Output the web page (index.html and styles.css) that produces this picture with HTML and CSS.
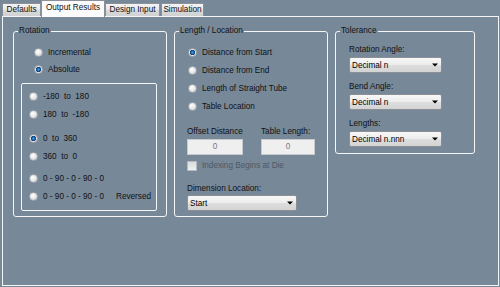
FILE: index.html
```html
<!DOCTYPE html>
<html>
<head>
    <meta charset="UTF-8">
    <title>Output Results</title>
    <link rel="stylesheet" href="styles.css">
</head>
<body>
    <div class="tabs">
        <div class="tab tab-defaults">Defaults</div>
        <div class="tab tab-output active">Output Results</div>
        <div class="tab tab-design">Design Input</div>
        <div class="tab tab-sim">Simulation</div>
    </div>
    <div class="page">
        <!-- Rotation -->
        <fieldset class="group group-rotation">
            <legend>Rotation</legend>
            <div class="mode-list">
                <div class="radio-row"><span class="radio"></span>Incremental</div>
                <div class="radio-row"><span class="radio checked"></span>Absolute</div>
            </div>
            <div class="range-box">
                <div class="range-pair">
                    <div class="radio-row"><span class="radio"></span>-180  to  180</div>
                    <div class="radio-row"><span class="radio"></span>180  to  -180</div>
                </div>
                <div class="range-pair">
                    <div class="radio-row"><span class="radio checked"></span>0  to  360</div>
                    <div class="radio-row"><span class="radio"></span>360  to  0</div>
                </div>
                <div class="range-pair">
                    <div class="radio-row"><span class="radio"></span>0 - 90 - 0 - 90 - 0</div>
                    <div class="radio-row"><span class="radio"></span>0 - 90 - 0 - 90 - 0<span class="reversed">Reversed</span></div>
                </div>
            </div>
        </fieldset>
        <!-- Length / Location -->
        <fieldset class="group group-length">
            <legend>Length / Location</legend>
            <div class="location-list">
                <div class="radio-row"><span class="radio checked"></span>Distance from Start</div>
                <div class="radio-row"><span class="radio"></span>Distance from End</div>
                <div class="radio-row"><span class="radio"></span>Length of Straight Tube</div>
                <div class="radio-row"><span class="radio"></span>Table Location</div>
            </div>
            <div class="offset-row">
                <div class="offset-col offset-distance">
                    <div class="label">Offset Distance</div>
                    <div class="field">0</div>
                </div>
                <div class="offset-col table-length">
                    <div class="label">Table Length:</div>
                    <div class="field">0</div>
                </div>
            </div>
            <div class="check-row"><span class="check"></span>Indexing Begins at Die</div>
            <div class="dimension">
                <div class="label">Dimension Location:</div>
                <div class="combo combo-wide"><span>Start</span><svg width="6" height="4" viewBox="0 0 6 4"><path d="M0 0.5H6L3 3.5Z" fill="#000"/></svg></div>
            </div>
        </fieldset>
        <!-- Tolerance -->
        <fieldset class="group group-tolerance">
            <legend>Tolerance</legend>
            <div class="tol-list">
                <div class="tol-item">
                    <div class="label">Rotation Angle:</div>
                    <div class="combo"><span>Decimal n</span><svg width="6" height="4" viewBox="0 0 6 4"><path d="M0 0.5H6L3 3.5Z" fill="#000"/></svg></div>
                </div>
                <div class="tol-item">
                    <div class="label">Bend Angle:</div>
                    <div class="combo"><span>Decimal n</span><svg width="6" height="4" viewBox="0 0 6 4"><path d="M0 0.5H6L3 3.5Z" fill="#000"/></svg></div>
                </div>
                <div class="tol-item">
                    <div class="label">Lengths:</div>
                    <div class="combo"><span>Decimal n.nnn</span><svg width="6" height="4" viewBox="0 0 6 4"><path d="M0 0.5H6L3 3.5Z" fill="#000"/></svg></div>
                </div>
            </div>
        </fieldset>
    </div>
</body>
</html>
```

FILE: styles.css
```css
body {
    margin: 0;
    width: 500px;
    height: 287px;
    overflow: hidden;
    background-color: #778899;
    font-family: "Liberation Sans", Arial, sans-serif;
    font-size: 8.2px;
    color: #111;
}

/* tab strip */
.tabs {
    display: flex;
    align-items: flex-end;
    height: 16px;
    padding-left: 2px;
}
.tab {
    box-sizing: border-box;
    height: 13px;
    line-height: 11px;
    text-align: center;
    border: 1px solid #8b8f97;
    border-bottom: none;
    border-radius: 1px 1px 0 0;
    background: linear-gradient(#f4f4f4, #e6e6e6 50%, #dadada 51%, #d0d1d2);
}
.tab-defaults { width: 39px; }
.tab-output { width: 64px; }
.tab-design { width: 55px; }
.tab-sim { width: 43px; margin-left: 1px; }
.tab.active {
    height: 17px;
    line-height: 14px;
    margin-bottom: -1px;
    background: #fbfbfc;
    position: relative;
    z-index: 1;
}

/* tab page */
.page {
    box-sizing: border-box;
    width: 497px;
    height: 270px;
    margin-left: 2px;
    border: 1px solid #f2f4f6;
    padding: 9px 0 0 10px;
    display: flex;
    align-items: flex-start;
    gap: 7px;
}

.group {
    box-sizing: border-box;
    margin: 0;
    padding: 0;
    min-width: 0;
    border: 1px solid #f4f6f8;
    border-radius: 3px;
}
.group legend {
    margin-left: 4px;
    padding: 0 1px;
    height: 10px;
    line-height: 10px;
}
.group-rotation { width: 154px; height: 191px; }
.group-length { width: 154px; height: 191px; }
.group-tolerance { width: 140px; height: 128px; }

/* radios */
.radio-row {
    display: flex;
    align-items: center;
    height: 18px;
    white-space: pre;
}
.radio {
    box-sizing: border-box;
    flex: none;
    width: 9px;
    height: 9px;
    border-radius: 50%;
    border: 1px solid #a3a8ad;
    background: radial-gradient(circle at 40% 35%, #ffffff 0, #ebebeb 45%, #c6c8cb 100%);
    margin-right: 5px;
}
.radio.checked {
    background: radial-gradient(circle at 50% 50%, #4a9ce0 0, #1c63a8 1.6px, #0b3f73 2.4px, #e9e9e9 3px, #c6c8cb 100%);
}

.mode-list {
    padding: 8px 0 0 20px;
}
.mode-list .radio-row { height: 17px; }

.range-box {
    box-sizing: border-box;
    width: 136px;
    height: 128px;
    margin: 5px 0 0 7px;
    border: 1px solid #f4f6f8;
    border-radius: 2px;
    padding: 3px 0 0 7px;
}
.range-pair + .range-pair { margin-top: 6px; }
.range-pair:last-child { margin-top: 4px; }
.reversed { margin-left: 12px; }

/* length / location */
.location-list {
    padding: 7px 0 0 13px;
}
.label {
    height: 10px;
    line-height: 10px;
    white-space: nowrap;
}
.offset-row {
    display: flex;
    gap: 18px;
    margin: 12px 0 0 12px;
}
.offset-col .label { margin-bottom: 2px; }
.offset-distance { width: 56px; }
.table-length { width: 54px; }
.field {
    box-sizing: border-box;
    height: 16px;
    line-height: 14px;
    text-align: center;
    color: #777;
    border: 1px solid #c7cacd;
    background: #efeff0;
}
.check-row {
    display: flex;
    align-items: center;
    height: 17px;
    margin: 2px 0 0 12px;
    color: #4f5862;
}
.check {
    box-sizing: border-box;
    width: 10px;
    height: 10px;
    margin-right: 5px;
    border: 1px solid #b7babe;
    background: linear-gradient(#d9dbdd, #eff0f1);
}
.dimension {
    margin: 10px 0 0 12px;
}
.dimension .label { margin-bottom: 1px; }

/* combo boxes */
.combo {
    box-sizing: border-box;
    width: 93px;
    height: 16px;
    display: flex;
    align-items: center;
    justify-content: space-between;
    padding: 0 3px 0 2px;
    border: 1px solid #8c9096;
    border-radius: 2px;
    background: linear-gradient(#f8f8f8, #ececec 50%, #dedede 51%, #d3d3d3);
    color: #000;
}
.combo-wide { width: 110px; }

/* tolerance */
.tol-list {
    padding: 8px 0 0 13px;
}
.tol-item .label {
    height: 11px;
    line-height: 11px;
    margin-bottom: 2px;
}
.tol-item + .tol-item { margin-top: 8px; }
```
